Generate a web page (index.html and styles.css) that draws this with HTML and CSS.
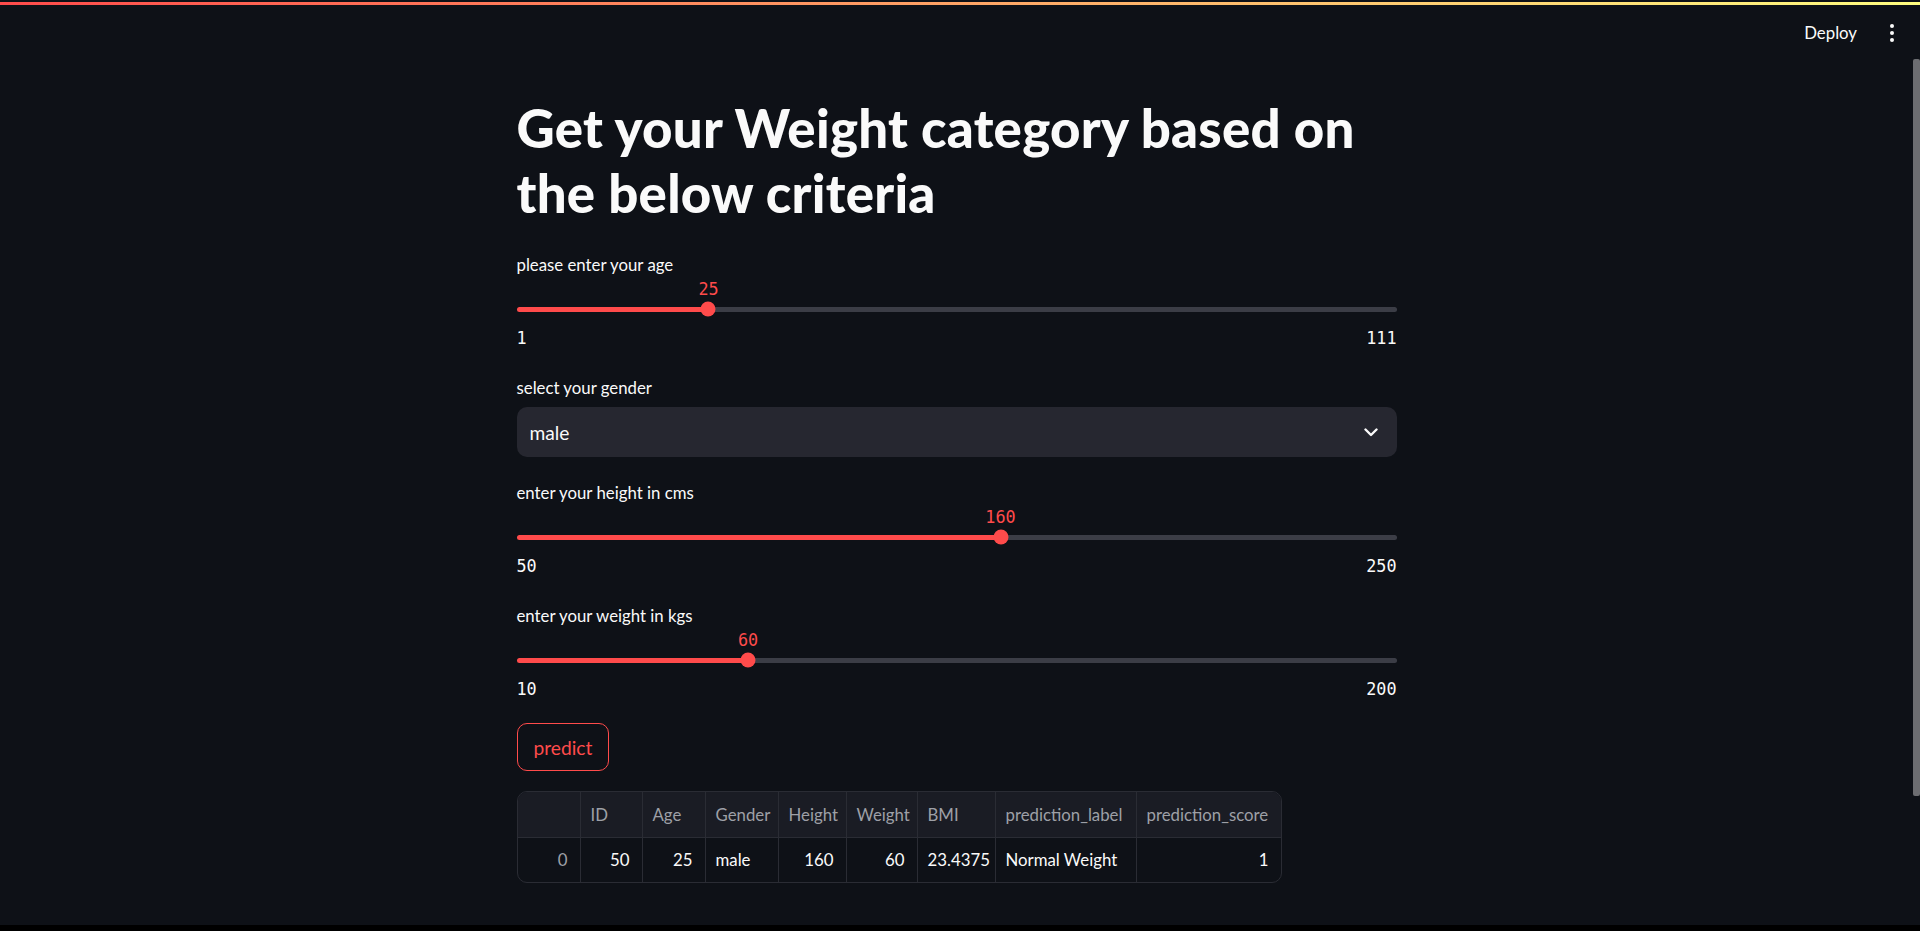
FILE: index.html
```html
<!DOCTYPE html>
<html lang="en">
<head>
<meta charset="utf-8">
<title>Weight category</title>
<link rel="stylesheet" href="styles.css">
</head>
<body>
<div class="app">
  <div class="decoration"></div>
  <div class="viewport">
    <div class="page">
      <header class="toolbar">
        <span class="deploy">Deploy</span>
        <span class="kebab"><i></i><i></i><i></i></span>
      </header>
      <main class="block">
        <h1 class="title">Get your Weight category based on the below criteria</h1>

        <section class="widget slider-widget">
          <div class="widget-label">please enter your age</div>
          <div class="slider-value-row"><span class="slider-value" style="left:21.818%">25</span></div>
          <div class="slider-track-wrap">
            <div class="track" style="background:linear-gradient(to right,#ff4b4b 0 21.818%,#3b3d46 21.818% 100%)"></div>
            <span class="thumb" style="left:21.818%"></span>
          </div>
          <div class="minmax"><span>1</span><span>111</span></div>
        </section>

        <section class="widget select-widget">
          <div class="widget-label">select your gender</div>
          <div class="select">
            <span class="select-value">male</span>
            <svg class="chevron" width="14" height="9" viewBox="0 0 14 9"><path d="M1.5 1.5 L7 7 L12.5 1.5" fill="none" stroke="#fafafa" stroke-width="2.4" stroke-linecap="round" stroke-linejoin="round"/></svg>
          </div>
        </section>

        <section class="widget slider-widget">
          <div class="widget-label">enter your height in cms</div>
          <div class="slider-value-row"><span class="slider-value" style="left:55%">160</span></div>
          <div class="slider-track-wrap">
            <div class="track" style="background:linear-gradient(to right,#ff4b4b 0 55%,#3b3d46 55% 100%)"></div>
            <span class="thumb" style="left:55%"></span>
          </div>
          <div class="minmax"><span>50</span><span>250</span></div>
        </section>

        <section class="widget slider-widget last-slider">
          <div class="widget-label">enter your weight in kgs</div>
          <div class="slider-value-row"><span class="slider-value" style="left:26.316%">60</span></div>
          <div class="slider-track-wrap">
            <div class="track" style="background:linear-gradient(to right,#ff4b4b 0 26.316%,#3b3d46 26.316% 100%)"></div>
            <span class="thumb" style="left:26.316%"></span>
          </div>
          <div class="minmax"><span>10</span><span>200</span></div>
        </section>

        <button class="btn">predict</button>

        <div class="df">
          <div class="hd"></div>
          <div class="hd">ID</div>
          <div class="hd">Age</div>
          <div class="hd">Gender</div>
          <div class="hd">Height</div>
          <div class="hd">Weight</div>
          <div class="hd">BMI</div>
          <div class="hd">prediction_label</div>
          <div class="hd">prediction_score</div>

          <div class="cell num idx">0</div>
          <div class="cell num">50</div>
          <div class="cell num">25</div>
          <div class="cell">male</div>
          <div class="cell num">160</div>
          <div class="cell num">60</div>
          <div class="cell">23.4375</div>
          <div class="cell">Normal Weight</div>
          <div class="cell num">1</div>
        </div>
      </main>
    </div>
    <div class="scrolltrack"><div class="scrollthumb"></div></div>
  </div>
  <div class="bottom-strip"></div>
</div>
</body>
</html>
```

FILE: styles.css
```css
html, body {
  margin: 0;
  padding: 0;
}
body {
  background: #0e1117;
  color: #fafafa;
  font-family: Lato, "Noto Sans", "DejaVu Sans", sans-serif;
  overflow: hidden;
}
.app {
  height: 931px;
  box-sizing: border-box;
  padding-top: 2px;
  display: flex;
  flex-direction: column;
}
.decoration {
  flex: none;
  height: 3px;
  background: linear-gradient(90deg, #ff4b4b, #fffd80);
}
.viewport {
  flex: 1;
  min-height: 0;
  display: flex;
}
.page {
  flex: 1;
  min-width: 0;
}
.scrolltrack {
  flex: none;
  width: 7px;
  padding-top: 54px;
}
.scrollthumb {
  height: 737px;
  background: #6c6d71;
  border-radius: 2px;
}
.bottom-strip {
  flex: none;
  height: 6px;
  background: #000;
}

/* toolbar */
.toolbar {
  height: 55px;
  display: flex;
  align-items: center;
  justify-content: flex-end;
  padding-right: 19px;
  gap: 33px;
}
.deploy {
  font-size: 16.8px;
  color: #fafafa;
}
.kebab {
  display: flex;
  flex-direction: column;
  gap: 3px;
}
.kebab i {
  display: block;
  width: 4px;
  height: 4px;
  border-radius: 50%;
  background: #fafafa;
}

/* main block */
.block {
  width: 880px;
  margin: 0 auto;
  padding-top: 35px;
}
.title {
  margin: 0 0 29px;
  font-size: 52.8px;
  line-height: 65px;
  font-weight: 900;
  letter-spacing: 0.25px;
  color: #fafafa;
}
.widget-label {
  font-size: 16.8px;
  line-height: 22px;
  height: 22px;
  color: #fafafa;
}

/* slider */
.slider-widget {
  margin-bottom: 29px;
}
.slider-widget.last-slider {
  margin-bottom: 24px;
}
.slider-value-row {
  position: relative;
  height: 20px;
  margin-top: 3px;
}
.slider-value {
  position: absolute;
  top: 0;
  transform: translateX(-50%);
  font-family: "DejaVu Sans Mono", "Liberation Mono", monospace;
  font-size: 16.8px;
  line-height: 20px;
  color: #ff4b4b;
}
.slider-track-wrap {
  position: relative;
  height: 20px;
  display: flex;
  align-items: center;
}
.track {
  flex: 1;
  height: 5px;
  border-radius: 3px;
}
.thumb {
  position: absolute;
  top: 50%;
  width: 15px;
  height: 15px;
  border-radius: 50%;
  background: #ff4b4b;
  transform: translate(-50%, -50%);
}
.minmax {
  margin-top: 9px;
  display: flex;
  justify-content: space-between;
  font-family: "DejaVu Sans Mono", "Liberation Mono", monospace;
  font-size: 16.8px;
  line-height: 20px;
  color: #fafafa;
}

/* select */
.select-widget {
  margin-bottom: 25px;
}
.select {
  margin-top: 8px;
  height: 50px;
  box-sizing: border-box;
  background: #262730;
  border-radius: 10px;
  display: flex;
  align-items: center;
  justify-content: space-between;
  padding: 0 19px 0 13px;
  font-size: 19.2px;
}

/* button */
.btn {
  display: block;
  height: 48px;
  padding: 0 16px;
  background: transparent;
  border: 1px solid #ff4b4b;
  border-radius: 10px;
  color: #ff4b4b;
  font-family: Lato, "Noto Sans", sans-serif;
  font-size: 19.2px;
  margin: 0 0 20px;
}

/* dataframe */
.df {
  display: grid;
  grid-template-columns: 63px 62px 63px 73px 68px 71px 78px 141px 144px;
  width: max-content;
  border: 1px solid #2a2c34;
  border-radius: 10px;
  overflow: hidden;
  font-size: 16.8px;
}
.hd, .cell {
  box-sizing: border-box;
  display: flex;
  align-items: center;
  padding: 0 12px 0 10px;
  border-right: 1px solid #2a2c34;
  white-space: nowrap;
}
.hd:nth-child(9n), .cell:nth-child(9n) {
  border-right: none;
}
.hd {
  height: 46px;
  background: #1a1c24;
  border-bottom: 1px solid #2a2c34;
  color: #9ea0a7;
}
.cell {
  height: 44px;
  padding-bottom: 2px;
  color: #fafafa;
}
.cell.num {
  justify-content: flex-end;
}
.cell.idx {
  color: #9ea0a7;
}
```
